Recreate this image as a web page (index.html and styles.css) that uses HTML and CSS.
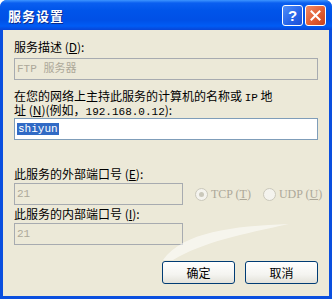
FILE: index.html
```html
<!DOCTYPE html>
<html lang="zh">
<head>
  <meta charset="UTF-8"/>
  <title>服务设置</title>
  <link rel="stylesheet" href="styles.css">
</head>
<body>
  <div class="window">
    <div class="titlebar">
      <span class="title">服务设置</span>
      <div class="caption-btns">
        <span class="cbtn help">?</span>
        <span class="cbtn close">
          <svg width="11" height="11" viewBox="0 0 11 11"><path d="M1.5 1.5 L9.5 9.5 M9.5 1.5 L1.5 9.5" stroke="#fff" stroke-width="2" stroke-linecap="square"/></svg>
        </span>
      </div>
    </div>
    <div class="client">
      <div class="lbl first">服务描述 (<u>D</u>):</div>
      <div class="edit disabled">FTP 服务器</div>
      <div class="lbl two">在您的网络上主持此服务的计算机的名称或 <span class="lat">IP</span> 地<br>址 (<u>N</u>)(例如，<span class="lat">192.168.0.12</span>):</div>
      <div class="edit"><span class="sel">shiyun</span></div>
      <div class="lbl ext">此服务的外部端口号 (<u>E</u>):</div>
      <div class="port-row">
        <div class="edit disabled short">21</div>
        <div class="radio-group">
          <span class="radio checked"></span><span class="rtext">TCP (<u>T</u>)</span>
          <span class="radio"></span><span class="rtext">UDP (<u>U</u>)</span>
        </div>
      </div>
      <div class="lbl int">此服务的内部端口号 (<u>I</u>):</div>
      <div class="edit disabled short">21</div>
      <div class="buttons">
        <button class="btn">确定</button>
        <button class="btn">取消</button>
      </div>
      <svg class="watermark" width="150" height="40" viewBox="0 0 150 40"><path d="M20 38 C 40 10, 90 4, 146 2 C 100 12, 60 20, 30 38 Z" fill="#fff" opacity="0.55"/></svg>
    </div>
  </div>
</body>
</html>
```
FILE: styles.css
```css
*, *::before, *::after { box-sizing: border-box; margin: 0; padding: 0; }
html, body { width: 332px; height: 299px; background: #fff; overflow: hidden; }
body { font-family: "Noto Sans CJK SC", "Liberation Sans", sans-serif; font-size: 12px; color: #000; }

.window { width: 332px; height: 299px; display: flex; flex-direction: column;
  background: #0a4fdf; border-radius: 7px 7px 0 0; overflow: hidden;
}
.titlebar { height: 30px; flex: none; display: flex; align-items: center; justify-content: space-between;
  padding: 0 6px 0 8px;
  background: linear-gradient(to bottom, #3d95ff 0, #0a5ff0 3px, #0055ea 10px, #0050e6 20px, #005cf5 26px, #0845d6 30px);
}
.title { color: #fff; font-weight: bold; font-size: 13px; letter-spacing: 1px;
  text-shadow: 1px 1px 0 #0a2a8a;
}
.caption-btns { display: flex; gap: 2px; margin-top: 1px; }
.cbtn { width: 21px; height: 21px; border: 1px solid #fff; border-radius: 3px;
  display: flex; align-items: center; justify-content: center;
}
.help { background: linear-gradient(135deg, #4f8ef8, #2663e8 60%, #1c4fd6);
  color: #fff; font: bold 15px "Liberation Sans", sans-serif;
}
.close { background: linear-gradient(135deg, #f08a66, #e05a30 60%, #c8421c); }

.client { flex: 1; margin: 0 3px 3px 3px; background: #ece9d8; padding: 10px 11px 0 11px;
  display: flex; flex-direction: column; position: relative;
}
.lbl { line-height: 13px; white-space: nowrap; }
.lat { font-family: "Liberation Mono", monospace; font-size: 11px; line-height: 10px; }
.lbl.two { margin-top: 9px; height: 26px; }
.lbl.ext { margin-top: 27px; }
.lbl.int { margin-top: 2px; }
.edit { height: 22px; flex: none; margin-top: 5px; border: 1px solid #7f9db9; background: #fff;
  padding: 3px 2px; line-height: 14px; white-space: nowrap;
  font-family: "Liberation Mono", "Noto Sans CJK SC", monospace; font-size: 11px;
}
.lbl.two + .edit, .lbl.int + .edit { margin-top: 3px; }
.edit.disabled { background: #ece9d8; border-color: #a7abb0; color: #aca899; }
.edit.short { width: 169px; }
.sel { background: #316ac5; color: #fff; padding: 0 1px; }

.port-row { display: flex; align-items: center; margin-top: 3px; height: 22px; }
.port-row .edit { margin-top: 0; }
.radio-group { display: flex; align-items: center; margin-left: 12px; color: #aca899; white-space: nowrap; }
.radio { width: 13px; height: 13px; flex: none; border: 1px solid #cac8bb; border-radius: 50%;
  background: #f4f3ee; display: flex; align-items: center; justify-content: center;
}
.radio.checked::after { content: ''; width: 5px; height: 5px; border-radius: 50%; background: #cac8bb; }
.rtext { margin: 0 12px 0 3px; font-family: "Liberation Serif", serif; font-size: 12px; }

.buttons { display: flex; justify-content: flex-end; gap: 10px; margin-top: 16px; }
.btn { width: 73px; height: 23px; border: 1px solid #003c74; border-radius: 3px;
  background: linear-gradient(to bottom, #fff 0, #f4f4f0 60%, #e3e2da 100%);
  font-family: "Noto Sans CJK SC", sans-serif; font-size: 12px; color: #000;
}

/* faint swoosh of the site watermark */
.watermark { position: absolute; left: 140px; top: 192px; pointer-events: none; }
```
